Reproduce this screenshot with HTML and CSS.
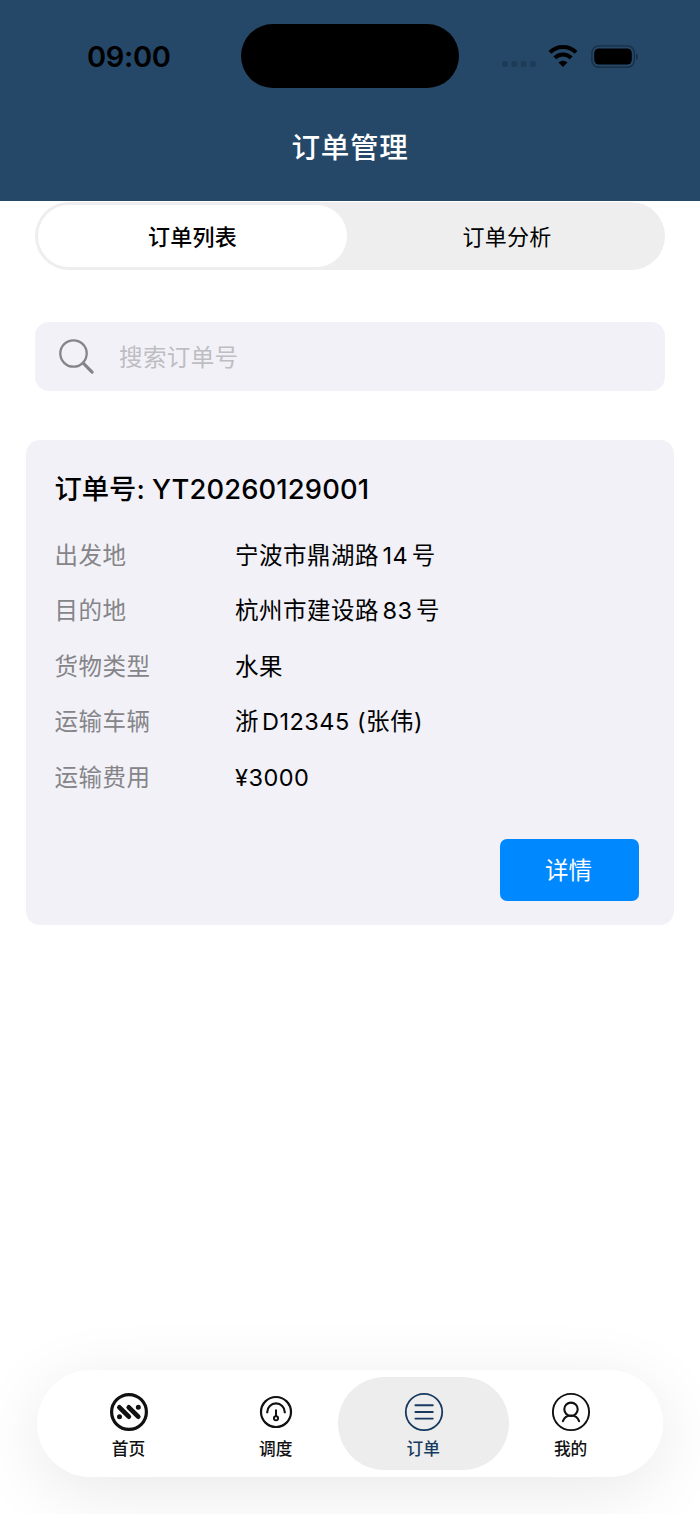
FILE: index.html
```html
<!DOCTYPE html>
<html lang="zh-CN">
  <head>
    <meta charset="utf-8">
    <title>订单管理</title>
    <meta name="viewport" content="width=device-width,initial-scale=1">
    <link rel="stylesheet" href="styles.css">
  </head>
  <body>
    <div class="app">
      <header class="header">
        <div class="status">
          <div class="time">09:00</div>
          <div class="island"></div>
          <div class="status-icons">
            <svg class="signal" width="34" height="6" viewBox="0 0 34 6">
              <rect x="0" y="0" width="6" height="6" rx="1.8"/>
              <rect x="9.3" y="0" width="6" height="6" rx="1.8"/>
              <rect x="18.6" y="0" width="6" height="6" rx="1.8"/>
              <rect x="27.9" y="0" width="6" height="6" rx="1.8"/>
            </svg>
            <svg class="wifi" width="30" height="22" viewBox="0 0 30 22">
              <path d="M2 7.4a18.6 18.6 0 0 1 26 0M6.8 12.8a11.6 11.6 0 0 1 16.4 0" fill="none" stroke="#000" stroke-width="4"/>
              <path d="M15 22l-4.5-4.5a6.4 6.4 0 0 1 9 0z"/>
            </svg>
            <svg class="battery" width="48" height="24" viewBox="0 0 48 24">
              <rect x=".9" y=".9" width="42.4" height="21.4" rx="6.8" fill="none" stroke="#182f45" stroke-width="1.4"/>
              <rect x="3.2" y="3.4" width="37.6" height="16.2" rx="4.8"/>
              <path d="M45 8.2c2.6 1.1 2.6 5.7 0 6.8z" fill="#182f45"/>
            </svg>
          </div>
        </div>
        <h1>订单管理</h1>
      </header>

      <main>
        <div class="segment">
          <button class="segment-item selected">订单列表</button>
          <button class="segment-item">订单分析</button>
        </div>

        <label class="search">
          <svg width="38" height="38" viewBox="0 0 38 38" fill="none" stroke="#858589" stroke-linecap="round">
            <circle cx="15.5" cy="15.5" r="13.2" stroke-width="2.3"/>
            <path d="M25.2 25.2l8.9 8.9" stroke-width="3.2"/>
          </svg>
          <input type="text" placeholder="搜索订单号">
        </label>

        <section class="card">
          <h2>订单号: <span class="number">YT20260129001</span></h2>
          <dl>
            <dt>出发地</dt>
            <dd>宁波市鼎湖路<span class="house">14</span>号</dd>
            <dt>目的地</dt>
            <dd>杭州市建设路<span class="house">83</span>号</dd>
            <dt>货物类型</dt>
            <dd>水果</dd>
            <dt>运输车辆</dt>
            <dd>浙<span class="plate">D12345</span> (张伟)</dd>
            <dt>运输费用</dt>
            <dd>¥3000</dd>
          </dl>
          <button class="detail">详情</button>
        </section>
      </main>

      <nav class="tabbar">
        <a class="tab">
          <svg width="40" height="40" viewBox="0 0 40 40" fill="none" stroke="currentColor" stroke-linecap="round">
            <circle cx="20" cy="20" r="17.4" stroke-width="3.2"/>
            <path d="M10.4 15.4l9.4 9.2M19.8 15.4l9.4 9.2" stroke-width="4.8"/>
            <path d="M10.5 24.8h.01M29.3 15.2h.01" stroke-width="5"/>
          </svg>
          <span>首页</span>
        </a>
        <a class="tab">
          <svg width="40" height="40" viewBox="0 0 40 40" fill="none" stroke="currentColor">
            <circle cx="20" cy="20" r="15" stroke-width="2.2"/>
            <path d="M11.2 21.2v-1a8.8 8.8 0 0 1 17.6 0v1" stroke-width="2.1"/>
            <path d="M20 17.4v6.6" stroke-width="2"/>
            <circle cx="20" cy="26.3" r="2.1" stroke-width="1.9"/>
          </svg>
          <span>调度</span>
        </a>
        <a class="tab active">
          <svg width="40" height="40" viewBox="0 0 40 40" fill="none" stroke="currentColor" stroke-linecap="round">
            <circle cx="20" cy="20" r="18.2" stroke-width="1.8"/>
            <path d="M11.4 13.3h17.4M11.4 20h17.4M11.4 26.6h17.4" stroke-width="1.9"/>
          </svg>
          <span>订单</span>
        </a>
        <a class="tab">
          <svg width="40" height="40" viewBox="0 0 40 40" fill="none" stroke="currentColor" stroke-linecap="round">
            <circle cx="20" cy="20" r="18.1" stroke-width="1.9"/>
            <circle cx="20" cy="17.3" r="6.7" stroke-width="2.1"/>
            <path d="M11.9 29.2a8.6 8.6 0 0 1 16.2 0" stroke-width="2.1"/>
          </svg>
          <span>我的</span>
        </a>
      </nav>
    </div>
  </body>
</html>
```

FILE: styles.css
```css
* {
  box-sizing: border-box;
}
html, body {
  margin: 0;
  width: 100%;
}
body, button, input {
  font-family: Inter, "Noto Sans CJK SC", sans-serif;
}
button {
  border: 0;
  padding: 0;
}
svg {
  display: block;
}
.app {
  display: flex;
  flex-direction: column;
  height: 1514px;
  background: #fff;
  color: #000;
  overflow: hidden;
}

/* header */
.header {
  height: 201px;
  background: #254768;
}
.status {
  display: grid;
  grid-template-columns: 241px 218px 1fr;
  height: 88px;
  padding-top: 24px;
}
.time {
  padding-left: 87px;
  font-size: 29px;
  font-weight: 600;
  letter-spacing: -.3px;
  line-height: 66px;
}
.island {
  height: 64px;
  border-radius: 32px;
  background: #000;
}
.status-icons {
  display: flex;
  padding-left: 43px;
}
.signal {
  margin-top: 37px;
  fill: #1d3c57;
}
.wifi {
  margin: 21px 0 0 12px;
}
.battery {
  margin: 21px 0 0 13px;
}
h1 {
  margin: 37px 0 0;
  color: #fff;
  font-size: 28.5px;
  font-weight: 500;
  letter-spacing: .7px;
  line-height: 46px;
  text-align: center;
}

/* list / analysis switch */
.segment {
  display: flex;
  height: 68px;
  margin: 1px 35px 0;
  padding: 3px;
  border-radius: 34px;
  background: #eee;
}
.segment-item {
  width: 50%;
  height: 62px;
  padding: 0 0 2px 8px;
  border-radius: 31px;
  background: none;
  color: #000;
  font-size: 22px;
  letter-spacing: .3px;
}
.segment-item.selected {
  width: 309px;
  padding-left: 0;
  background: #fff;
  font-weight: 500;
}

/* search */
.search {
  display: flex;
  align-items: center;
  height: 69px;
  margin: 52px 35px 0;
  padding-left: 23px;
  border-radius: 14px;
  background: #f2f1f7;
}
.search input {
  width: 480px;
  margin-left: 23px;
  padding: 2px 0 0;
  border: 0;
  background: none;
  font-size: 23.5px;
  letter-spacing: .4px;
}
.search input::placeholder {
  color: #bdbdc2;
}

/* order card */
.card {
  display: flex;
  flex-direction: column;
  height: 485px;
  margin: 49px 26px 0;
  padding: 29px 35px 24px 28.5px;
  border-radius: 14px;
  background: #f2f1f7;
}
h2 {
  margin: 0;
  font-size: 27.3px;
  font-weight: 500;
  line-height: 42px;
  white-space: nowrap;
}
.number {
  letter-spacing: .15px;
}
dl {
  display: grid;
  grid-template-columns: 180.5px 1fr;
  grid-auto-rows: 55.4px;
  margin: 17px 0 0;
  font-size: 23.5px;
  letter-spacing: .5px;
  line-height: 55px;
  white-space: nowrap;
}
dt {
  color: #858589;
}
dd {
  margin: 0;
}
.house {
  margin: 0 3.5px;
}
.plate {
  margin-left: 3px;
}
.detail {
  align-self: flex-end;
  width: 139px;
  height: 62px;
  margin-top: auto;
  padding: 0 2px 2px 0;
  border-radius: 7px;
  background: #0088ff;
  color: #fff;
  font-size: 23.5px;
}

/* bottom navigation */
.tabbar {
  display: grid;
  grid-template-columns: repeat(4, 147.4px);
  justify-content: center;
  height: 107px;
  margin: auto 37px 37px;
  padding: 7px 0;
  border-radius: 53.5px;
  background: #fff;
  box-shadow: 0 14px 70px rgba(0, 0, 0, .09);
}
.tab {
  display: flex;
  flex-direction: column;
  align-items: center;
  height: 93px;
  margin: 0 -12px;
  padding-top: 15px;
  border-radius: 46.5px;
  color: #111;
  font-size: 16.7px;
  font-weight: 500;
}
.tab span {
  margin: 5px 1px 0 0;
  line-height: 25px;
}
.tab.active {
  background: #ededed;
  color: #173b60;
}
```
